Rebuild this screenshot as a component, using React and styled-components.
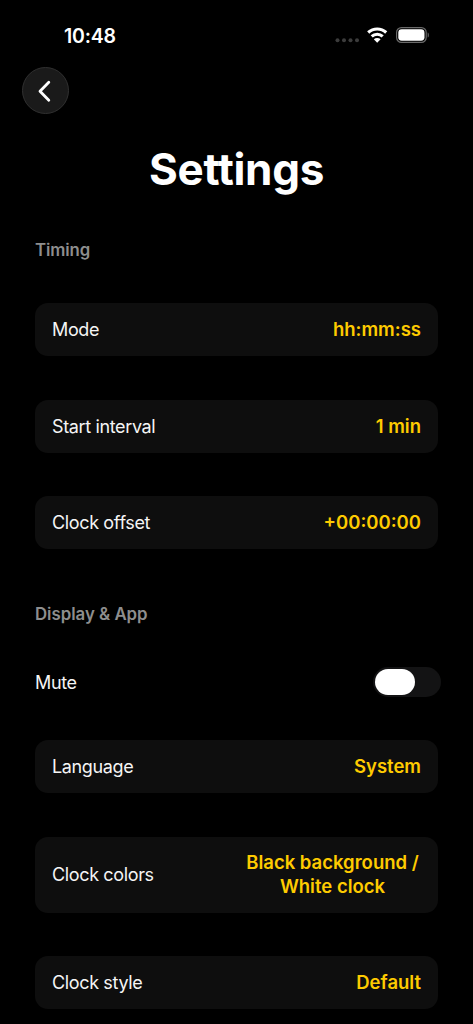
import React, { useState } from 'react';
import styled, { createGlobalStyle } from 'styled-components';

const GlobalStyle = createGlobalStyle`
  * {
    box-sizing: border-box;
  }

  body {
    margin: 0;
    background: #000;
    color: #fff;
    font-family: Inter, 'Liberation Sans', sans-serif;
    overflow: hidden;
  }
`;

const Screen = styled.div`
  width: 473px;
  height: 1024px;
  overflow: hidden;
  background: #000;
`;

const StatusBar = styled.header`
  display: flex;
  align-items: center;
  justify-content: space-between;
  height: 67px;
  padding: 4px 43px 0 64px;
`;

const Time = styled.span`
  font-size: 19.5px;
  font-weight: 600;
  line-height: 24px;
  letter-spacing: -0.2px;
`;

const StatusIcons = styled.div`
  display: flex;
  align-items: center;
  margin-top: -1px;
`;

const NavBar = styled.nav`
  display: flex;
  height: 48px;
  padding-left: 22px;
`;

const BackButton = styled.button`
  display: flex;
  align-items: center;
  justify-content: center;
  width: 47px;
  height: 47px;
  padding: 0 2px 0 0;
  border: 1px solid #303030;
  border-radius: 50%;
  background: #1a1a1a;
`;

const Title = styled.h1`
  margin: 27px 0 0;
  font-size: 44px;
  font-weight: 700;
  line-height: 54px;
  letter-spacing: -0.3px;
  text-align: center;
`;

const Section = styled.section`
  padding: 0 35px;
`;

const SectionTitle = styled.h2`
  margin: ${props => props.$top}px 0 ${props => props.$bottom}px;
  font-size: 16.8px;
  font-weight: 600;
  line-height: 22px;
  letter-spacing: ${props => props.$tracking || 0}px;
  color: #8e8e8e;
`;

const CardList = styled.div`
  display: flex;
  flex-direction: column;
  gap: 43.4px;
`;

const Card = styled.div`
  display: flex;
  align-items: center;
  justify-content: space-between;
  min-height: 53px;
  padding: 14px 17px;
  border-radius: 13px;
  background: #0e0e0e;
`;

const Label = styled.span`
  padding-top: 1px;
  font-size: 18px;
  font-weight: 400;
  line-height: 24px;
  letter-spacing: -0.36px;
  color: #f5f5f5;
`;

const Value = styled.span`
  font-size: 18.5px;
  font-weight: 600;
  line-height: 23.5px;
  color: #fecb00;
  text-align: center;
  white-space: pre-line;
`;

const WideValue = styled(Value)`
  width: 177px;
  padding: 0.5px 0;
`;

const ToggleRow = styled.div`
  display: flex;
  align-items: center;
  justify-content: space-between;
  height: 30px;
  margin-right: -3px;
  margin-bottom: 43.3px;
`;

const Toggle = styled.button`
  display: flex;
  justify-content: ${props => (props.$on ? 'flex-end' : 'flex-start')};
  width: 68px;
  height: 30px;
  padding: 2px;
  border: 0;
  border-radius: 15px;
  background: ${props => (props.$on ? '#fecb00' : '#131314')};
`;

const Knob = styled.span`
  width: 40px;
  height: 26px;
  border-radius: 13px;
  background: #fff;
`;

const timingRows = [
  { label: 'Mode', value: 'hh:mm:ss' },
  { label: 'Start interval', value: '1 min' },
  { label: 'Clock offset', value: '+00:00:00' },
];

const displayRows = [
  { label: 'Language', value: 'System' },
  { label: 'Clock colors', value: 'Black background /\nWhite clock', wide: true },
  { label: 'Clock style', value: 'Default' },
];

const SignalDots = () => (
  <svg width="31" height="20" viewBox="0 0 31 20" fill="#3c3c3c">
    <circle cx="3.5" cy="15.2" r="2" />
    <circle cx="10" cy="15.2" r="2" />
    <circle cx="16.5" cy="15.2" r="2" />
    <circle cx="23" cy="15.2" r="2" />
  </svg>
);

const WifiIcon = () => (
  <svg width="31" height="20" viewBox="0 0 31 20" fill="none" stroke="#fff" strokeWidth="3.1">
    <path d="M3.2 7.5a13.2 13.2 0 0 1 18 0" />
    <path d="M6.7 11.4a8.1 8.1 0 0 1 11 0" />
    <path d="M12.2 17.7 8.8 14.3a4.9 4.9 0 0 1 6.8 0Z" fill="#fff" stroke="none" />
  </svg>
);

const BatteryIcon = () => (
  <svg width="34" height="20" viewBox="0 0 34 20">
    <rect x="0.6" y="2.6" width="29.6" height="14.8" rx="4.8" fill="none" stroke="#6a6a6a" strokeWidth="1.2" />
    <rect x="2.3" y="4.3" width="26.2" height="11.4" rx="3.4" fill="#fff" />
    <path d="M31.7 7.4c1.5.6 1.5 4.6 0 5.2Z" fill="#6a6a6a" />
  </svg>
);

const Chevron = () => (
  <svg width="24" height="24" viewBox="0 0 24 24" fill="none">
    <path d="M15.8 3.2 7 12.2l8.8 9" stroke="#fff" strokeWidth="2.8" strokeLinecap="round" strokeLinejoin="round" />
  </svg>
);

const SettingCard = ({ label, value, wide }) => (
  <Card>
    <Label>{label}</Label>
    {wide ? <WideValue>{value}</WideValue> : <Value>{value}</Value>}
  </Card>
);

const App = () => {
  const [muted, setMuted] = useState(false);

  return (
    <>
      <GlobalStyle />
      <Screen>
        <StatusBar>
          <Time>10:48</Time>
          <StatusIcons>
            <SignalDots />
            <WifiIcon />
            <BatteryIcon />
          </StatusIcons>
        </StatusBar>

        <NavBar>
          <BackButton aria-label="Back">
            <Chevron />
          </BackButton>
        </NavBar>

        <Title>Settings</Title>

        <Section>
          <SectionTitle $top={43} $bottom={42.4} $tracking={-0.1}>Timing</SectionTitle>
          <CardList>
            {timingRows.map(row => (
              <SettingCard key={row.label} {...row} />
            ))}
          </CardList>
        </Section>

        <Section>
          <SectionTitle $top={53.9} $bottom={42}>Display &amp; App</SectionTitle>
          <ToggleRow>
            <Label>Mute</Label>
            <Toggle $on={muted} aria-label="Mute" onClick={() => setMuted(!muted)}>
              <Knob />
            </Toggle>
          </ToggleRow>
          <CardList>
            {displayRows.map(row => (
              <SettingCard key={row.label} {...row} />
            ))}
          </CardList>
        </Section>
      </Screen>
    </>
  );
};

export default App;
